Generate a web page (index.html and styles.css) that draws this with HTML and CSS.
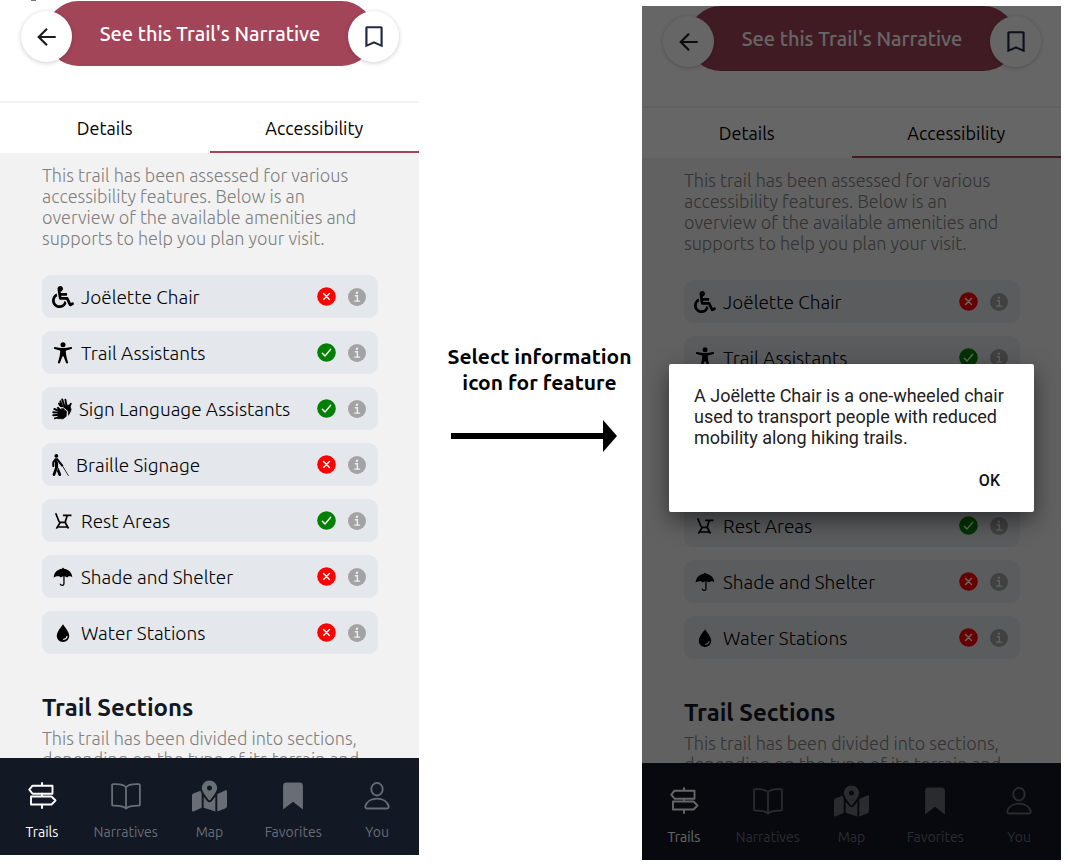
FILE: index.html
```html
<!DOCTYPE html>
<html lang="en">
<head>
<meta charset="utf-8">
<meta name="viewport" content="width=device-width, initial-scale=1">
<title>Trail accessibility</title>
<link rel="stylesheet" href="styles.css">
</head>
<body>
<svg class="sprite" aria-hidden="true">
  <symbol id="i-back" viewBox="0 0 24 24"><path d="M21.5 12H3.5M12 3 3 12l9 9" fill="none" stroke="currentColor" stroke-width="2.4"/></symbol>
  <symbol id="i-save" viewBox="0 0 24 24"><path fill="currentColor" d="M18 18.6 12 16l-6 2.600V4h12M18.500 2h-13C4.700 2 4 2.700 4 3.500V21.500L12 18l8 3.500V3.500C20 2.700 19.300 2 18.500 2Z"/></symbol>
  <symbol id="i-chair" viewBox="0 0 512 512"><path fill="currentColor" d="M496.101 385.669l14.227 28.663c3.929 7.915.697 17.516-7.218 21.445l-65.465 32.886c-16.049 7.967-35.556 1.194-43.189-15.055L331.679 320H192c-15.925 0-29.426-11.710-31.679-27.475C126.433 55.308 128.380 70.044 128 64c0-36.358 30.318-65.635 67.052-63.929 33.271 1.545 60.048 28.905 60.925 62.201.868 32.933-23.152 60.423-54.608 65.039l4.670 32.690H336c8.837 0 16 7.163 16 16v32c0 8.837-7.163 16-16 16H215.182l4.572 32H352a32 32 0 0 1 28.962 18.392L438.477 396.800l36.178-18.349c7.915-3.929 17.517-.697 21.446 7.218zM311.358 352h-24.506c-7.788 54.204-54.528 96-110.852 96-61.757 0-112-50.243-112-112 0-41.505 22.694-77.809 56.324-97.156-3.712-25.965-6.844-47.860-9.488-66.333C45.956 198.464 0 261.963 0 336c0 97.047 78.953 176 176 176 71.870 0 133.806-43.308 161.110-105.192L311.358 352z"/></symbol>
  <symbol id="i-person" viewBox="0 0 22 22"><circle cx="11" cy="2.800" r="2.500" fill="currentColor"/><path fill="currentColor" d="M3.100 5.100c2.600.700 5.200 1 7.900 1s5.300-.3 7.900-1c1.300-.3 1.700 1.500.5 1.900l-5.200 1.400c-.5.200-.5.900-.4 1.600.3 3.500 1 6.600 2.200 9.900.5 1.500-1.400 2.100-2 .8l-2.400-6.200h-1.200L8 20.700c-.6 1.300-2.500.7-2-.8 1.200-3.300 1.900-6.400 2.200-9.900.1-.7.100-1.400-.4-1.600L2.600 7c-1.200-.4-.8-2.200.5-1.900z"/></symbol>
  <symbol id="i-hands" viewBox="0 0 20 22"><g stroke="currentColor" stroke-linecap="round" fill="currentColor"><path d="M10.500 9 8.400 3.300M12.400 8 10.200 1.400M14.500 8 13.400 1.600M16.800 9.500 18.800 5.800M9.600 9.500 7 5.600" stroke-width="1.900" fill="none"/><path d="M9.500 9.800 15 7l2.700.3 1.500 4.200-1.300 3.500-2.400 3.200.2-3.700-3.200-3.500z" stroke-width=".6"/></g><g stroke="#e4e7ec" stroke-width="1" stroke-linecap="round" fill="none"><path d="m6.500 9.300 4.600.4 4.600 3.500-.2 5.400"/></g><g stroke="currentColor" stroke-linecap="round" fill="currentColor"><path d="M8 13.400 2.300 11M8 14.900 1.200 14.200M8 16.800 1.200 17.300M9 18.700 2.800 20.300M9 12.700 5.800 9.800" stroke-width="1.900" fill="none"/><path d="M7.500 12.500 11.200 10.800l3.200 3-.3 4.600-3 2.400-5-.2z" stroke-width=".8"/></g></symbol>
  <symbol id="i-cane" viewBox="0 0 384 512"><path fill="currentColor" d="M380.150 510.837a8 8 0 0 1-10.989-2.687l-125.330-206.427a31.923 31.923 0 0 0 12.958-9.485l126.048 207.608a8 8 0 0 1-2.687 10.991zM142.803 314.338l-32.540 89.485 36.120 88.285c6.693 16.360 25.377 24.192 41.733 17.501 16.357-6.692 24.193-25.376 17.501-41.734l-62.814-153.537zM96 88c24.301 0 44-19.699 44-44S120.301 0 96 0 52 19.699 52 44s19.699 44 44 44zm154.837 169.128l-120-152c-4.733-5.995-11.750-9.108-18.837-9.112V96H80v.026c-7.146.003-14.217 3.161-18.944 9.240L0 183.766v95.694c0 13.455 11.011 24.791 24.464 24.536C37.505 303.748 48 293.100 48 280v-79.766l16-20.571v140.698L9.927 469.055c-6.040 16.609 2.528 34.969 19.138 41.009 16.602 6.039 34.968-2.524 41.009-19.138L136 309.638V202.441l-31.406-39.816a4 4 0 1 1 6.269-4.971l102.300 129.217c9.145 11.584 24.368 11.339 33.708 3.965 10.410-8.216 12.159-23.334 3.966-33.708z"/></symbol>
  <symbol id="i-rest" viewBox="0 0 22 22"><path d="M3.700 3.200 7.200 12M7 12.400h7.300M11 5.300h8.500M15.200 5.800l-2 6.300M8.200 12.500 4.400 18.600M13.200 12.500l3.300 6M6.300 17h9.400" fill="none" stroke="currentColor" stroke-width="1.700"/></symbol>
  <symbol id="i-umbrella" viewBox="0 0 22 22"><path fill="currentColor" d="M11 1.800c.6 0 .9.400.9.900 4.700.4 8.300 4.200 8.400 8.800-.6-.9-1.500-1.300-2.500-1.300-1.200 0-2 .5-2.700 1.300-.7-.8-1.600-1.200-2.500-1.300v7.200c0 1.500-1 2.600-2.500 2.600-1.400 0-2.300-.9-2.400-2.200H9c.1.600.5.900 1.100.9.700 0 1.200-.5 1.200-1.300v-7.200c-1 .1-1.800.5-2.500 1.300-.7-.8-1.500-1.300-2.700-1.300-1.600 0-2.900.4-4.400 1.300.1-4.600 3.700-8.400 8.400-8.800 0-.5.300-.9.900-.9z"/></symbol>
  <symbol id="i-drop" viewBox="0 0 22 22"><path fill="currentColor" d="M11 2.200c1.900 2.900 6.200 7.600 6.200 11.500 0 3.600-2.700 6.200-6.200 6.200s-6.200-2.600-6.200-6.200c0-3.900 4.300-8.600 6.200-11.500z"/><path d="M11.700 17.400c1.700-.1 3.100-1.300 3.300-3.100" fill="none" stroke="#e4e7ec" stroke-width="1.200" stroke-linecap="round"/></symbol>
  <symbol id="i-no" viewBox="0 0 20 20"><circle cx="10" cy="10" r="9.800" fill="red"/><path d="m6.900 6.900 6.200 6.200m0-6.200-6.200 6.200" stroke="#fff" stroke-width="1.500" stroke-linecap="round"/></symbol>
  <symbol id="i-yes" viewBox="0 0 20 20"><circle cx="10" cy="10" r="9.800" fill="green"/><path d="m5.600 10.800 2.800 3 6-7.200" fill="none" stroke="#fff" stroke-width="1.500" stroke-linecap="round" stroke-linejoin="round"/></symbol>
  <symbol id="i-info" viewBox="0 0 18 18"><circle cx="9" cy="9" r="9" fill="#a3a3a3"/><circle cx="8.900" cy="4.700" r="1.200" fill="#eceef1"/><path d="M7.300 7.700h2v5.400M6.600 13.100h5" fill="none" stroke="#eceef1" stroke-width="1.400" stroke-linecap="round"/></symbol>
  <symbol id="i-signs" viewBox="0 0 32 32"><path d="M16 3v2.500M16 13.500v3M16 24.500V28M6.500 5.700h20v8h-20L3.300 9.700zM5 16.500h20.500l4 4-4 4H5z" fill="none" stroke="currentColor" stroke-width="1.900" stroke-linejoin="round" stroke-linecap="round"/></symbol>
  <symbol id="i-book" viewBox="0 0 32 32"><path d="M16 7.200C14 4.700 9.500 3.800 3 4.200c-.6 0-.9.400-.9.900v19.600c0 .6.400.9.900.9 6.500-.2 10.500.5 13 2.900 2.500-2.400 6.500-3.100 13-2.900.5 0 .9-.3.900-.9V5.100c0-.5-.3-.9-.9-.9-6.500-.4-11 .5-13 3zV28" fill="none" stroke="currentColor" stroke-width="1.800" stroke-linejoin="round"/></symbol>
  <symbol id="i-map" viewBox="0 0 576 512"><path fill="currentColor" d="M288 0c-69.590 0-126 56.410-126 126 0 56.260 82.350 158.800 113.900 196.020 6.390 7.540 17.820 7.540 24.200 0C331.650 284.800 414 182.260 414 126 414 56.410 357.590 0 288 0zm0 168c-23.200 0-42-18.800-42-42s18.800-42 42-42 42 18.800 42 42-18.800 42-42 42zM20.120 215.950A32.006 32.006 0 0 0 0 245.660v250.320c0 11.320 11.430 19.060 21.940 14.860L160 448V214.920c-8.840-15.980-16.070-31.540-21.250-46.420L20.120 215.950zM288 359.670c-14.070 0-27.380-6.180-36.510-16.960-19.660-23.200-40.570-49.620-59.490-76.720v182l192 64V266c-18.920 27.090-39.820 53.520-59.490 76.720-9.130 10.770-22.440 16.950-36.510 16.950zm266.060-198.510L416 224v288l139.880-55.950A31.996 31.996 0 0 0 576 426.340V176.020c0-11.320-11.430-19.060-21.940-14.860z"/></symbol>
  <symbol id="i-mark" viewBox="0 0 32 32"><path fill="currentColor" d="M9.500 2.500h13a3.400 3.400 0 0 1 3.400 3.400v23.600L16 21.700 6.100 29.500V5.900a3.400 3.400 0 0 1 3.400-3.400z"/></symbol>
  <symbol id="i-you" viewBox="0 0 32 32"><ellipse cx="16" cy="9.200" rx="5.700" ry="6.300" fill="none" stroke="currentColor" stroke-width="1.800"/><path d="M6 28.500h20c1.300 0 2-1 1.700-2.300-1.300-4.700-6-7.600-11.700-7.600S5.600 21.500 4.300 26.200C4 27.500 4.700 28.500 6 28.500z" fill="none" stroke="currentColor" stroke-width="1.800"/></symbol>
</svg>

<main class="walkthrough">
  <section class="phone" aria-label="Accessibility tab">
    <header class="hero">
      <span class="notch"></span>
      <button class="round" aria-label="Back"><svg class="ico-back"><use href="#i-back"/></svg></button>
      <button class="pill">See this Trail's Narrative</button>
      <button class="round" aria-label="Save trail"><svg class="ico-save"><use href="#i-save"/></svg></button>
    </header>
    <nav class="tabs"><button class="tab">Details</button><button class="tab active">Accessibility</button></nav>
    <div class="content">
      <p class="copy">This trail has been assessed for various<br>accessibility features. Below is an<br>overview of the available amenities and<br>supports to help you plan your visit.</p>
      <ul class="features">
        <li class="feature"><svg class="sym"><use href="#i-chair"/></svg><span class="name">Joëlette Chair</span><svg class="status"><use href="#i-no"/></svg><button class="info" aria-label="About Joëlette Chair"><svg><use href="#i-info"/></svg></button></li>
        <li class="feature"><svg class="sym"><use href="#i-person"/></svg><span class="name">Trail Assistants</span><svg class="status"><use href="#i-yes"/></svg><button class="info" aria-label="About Trail Assistants"><svg><use href="#i-info"/></svg></button></li>
        <li class="feature"><svg class="sym hands"><use href="#i-hands"/></svg><span class="name">Sign Language Assistants</span><svg class="status"><use href="#i-yes"/></svg><button class="info" aria-label="About Sign Language Assistants"><svg><use href="#i-info"/></svg></button></li>
        <li class="feature"><svg class="sym narrow"><use href="#i-cane"/></svg><span class="name">Braille Signage</span><svg class="status"><use href="#i-no"/></svg><button class="info" aria-label="About Braille Signage"><svg><use href="#i-info"/></svg></button></li>
        <li class="feature"><svg class="sym"><use href="#i-rest"/></svg><span class="name">Rest Areas</span><svg class="status"><use href="#i-yes"/></svg><button class="info" aria-label="About Rest Areas"><svg><use href="#i-info"/></svg></button></li>
        <li class="feature"><svg class="sym"><use href="#i-umbrella"/></svg><span class="name">Shade and Shelter</span><svg class="status"><use href="#i-no"/></svg><button class="info" aria-label="About Shade and Shelter"><svg><use href="#i-info"/></svg></button></li>
        <li class="feature"><svg class="sym"><use href="#i-drop"/></svg><span class="name">Water Stations</span><svg class="status"><use href="#i-no"/></svg><button class="info" aria-label="About Water Stations"><svg><use href="#i-info"/></svg></button></li>
      </ul>
      <h2 class="heading">Trail Sections</h2>
      <p class="copy">This trail has been divided into sections,<br>depending on the type of its terrain and</p>
    </div>
    <nav class="bottom">
      <a class="item current" href="#trails"><svg><use href="#i-signs"/></svg>Trails</a>
      <a class="item" href="#narratives"><svg><use href="#i-book"/></svg>Narratives</a>
      <a class="item" href="#map"><svg class="wide"><use href="#i-map"/></svg>Map</a>
      <a class="item" href="#favorites"><svg><use href="#i-mark"/></svg>Favorites</a>
      <a class="item" href="#you"><svg><use href="#i-you"/></svg>You</a>
    </nav>
  </section>

  <section class="step">
    <p class="step-text">Select information<br>icon for feature</p>
    <svg class="arrow" viewBox="0 0 166 32" aria-hidden="true"><path d="M0 13h152V0l14 16-14 16V19H0z"/></svg>
  </section>

  <section class="phone second" aria-label="Feature information">
    <header class="hero">
      <button class="round" aria-label="Back"><svg class="ico-back"><use href="#i-back"/></svg></button>
      <button class="pill">See this Trail's Narrative</button>
      <button class="round" aria-label="Save trail"><svg class="ico-save"><use href="#i-save"/></svg></button>
    </header>
    <nav class="tabs"><button class="tab">Details</button><button class="tab active">Accessibility</button></nav>
    <div class="content">
      <p class="copy">This trail has been assessed for various<br>accessibility features. Below is an<br>overview of the available amenities and<br>supports to help you plan your visit.</p>
      <ul class="features">
        <li class="feature"><svg class="sym"><use href="#i-chair"/></svg><span class="name">Joëlette Chair</span><svg class="status"><use href="#i-no"/></svg><button class="info" aria-label="About Joëlette Chair"><svg><use href="#i-info"/></svg></button></li>
        <li class="feature"><svg class="sym"><use href="#i-person"/></svg><span class="name">Trail Assistants</span><svg class="status"><use href="#i-yes"/></svg><button class="info" aria-label="About Trail Assistants"><svg><use href="#i-info"/></svg></button></li>
        <li class="feature"></li>
        <li class="feature"></li>
        <li class="feature"><svg class="sym"><use href="#i-rest"/></svg><span class="name">Rest Areas</span><svg class="status"><use href="#i-yes"/></svg><button class="info" aria-label="About Rest Areas"><svg><use href="#i-info"/></svg></button></li>
        <li class="feature"><svg class="sym"><use href="#i-umbrella"/></svg><span class="name">Shade and Shelter</span><svg class="status"><use href="#i-no"/></svg><button class="info" aria-label="About Shade and Shelter"><svg><use href="#i-info"/></svg></button></li>
        <li class="feature"><svg class="sym"><use href="#i-drop"/></svg><span class="name">Water Stations</span><svg class="status"><use href="#i-no"/></svg><button class="info" aria-label="About Water Stations"><svg><use href="#i-info"/></svg></button></li>
      </ul>
      <h2 class="heading">Trail Sections</h2>
      <p class="copy">This trail has been divided into sections,<br>depending on the type of its terrain and</p>
    </div>
    <nav class="bottom">
      <a class="item current" href="#trails"><svg><use href="#i-signs"/></svg>Trails</a>
      <a class="item" href="#narratives"><svg><use href="#i-book"/></svg>Narratives</a>
      <a class="item" href="#map"><svg class="wide"><use href="#i-map"/></svg>Map</a>
      <a class="item" href="#favorites"><svg><use href="#i-mark"/></svg>Favorites</a>
      <a class="item" href="#you"><svg><use href="#i-you"/></svg>You</a>
    </nav>
    <div class="scrim">
      <div class="dialog" role="dialog" aria-modal="true" aria-labelledby="dialog-text">
        <p class="dialog-text" id="dialog-text">A Joëlette Chair is a one-wheeled chair<br>used to transport people with reduced<br>mobility along hiking trails.</p>
        <button class="ok">OK</button>
      </div>
    </div>
  </section>
</main>
</body>
</html>
```

FILE: styles.css
```css
* { box-sizing: border-box; }
body {
  margin: 0;
  background: #fff;
  color: #000;
  font-family: Ubuntu, "Noto Sans", sans-serif;
}
button { margin: 0; padding: 0; border: 0; background: none; color: inherit; font: inherit; cursor: pointer; }
p, ul, h2 { margin: 0; padding: 0; }
a { color: inherit; text-decoration: none; }
svg { display: block; flex: none; }
.sprite { position: absolute; width: 0; height: 0; }

.walkthrough {
  display: grid;
  grid-template-columns: 419fr 223fr 419fr;
  align-items: start;
  padding-right: 7px;
}
.phone {
  position: relative;
  display: flex;
  flex-direction: column;
  height: calc(100vh - 13px);
  overflow: hidden;
  white-space: nowrap;
}
.second { margin-top: 5px; }

.hero {
  display: flex;
  justify-content: center;
  padding: 1px 20px 35px 21px;
  border-bottom: 2px solid #f2f2f2;
}
.notch { position: absolute; top: 0; left: 31px; width: 5px; height: 1px; background: #777; }
.pill {
  flex: 1;
  height: 65px;
  margin: 0 -26px;
  border-radius: 33px;
  background: #a34558;
  color: #fff;
  font-size: 20px;
  font-weight: 500;
}
.round {
  position: relative;
  display: grid;
  place-items: center;
  width: 51px;
  height: 51px;
  margin-top: 10px;
  border-radius: 50%;
  background: #fff;
  box-shadow: 0 1px 5px rgba(0, 0, 0, .2);
}
.ico-back { width: 22px; height: 22px; color: #1c1c1e; }
.ico-save { width: 26px; height: 26px; color: #1f2a40; }

.tabs { display: flex; }
.tab { flex: 1; height: 50px; padding-top: 2px; border-bottom: 2px solid transparent; font-size: 18px; line-height: 24px; }
.tab.active { border-color: #a34558; }

.content { flex: 1; min-height: 0; overflow: hidden; padding: 12px 41px 0 42px; background: #f2f2f2; }
.copy { color: #808080; font-size: 18px; font-weight: 300; line-height: 21px; }
.features { display: grid; gap: 13px; margin-top: 26px; list-style: none; }
.feature {
  display: flex;
  align-items: center;
  height: 43px;
  padding: 0 12px 0 10px;
  border-radius: 9px;
  background: #e4e7ec;
  font-size: 19px;
  font-weight: 300;
}
.sym { width: 22px; height: 22px; }
.sym.hands { width: 20px; }
.sym.narrow { width: 17px; }
.name { flex: 1; margin-left: 7px; }
.status { width: 19px; height: 19px; margin-right: 12px; }
.info svg { width: 18px; height: 18px; }
.heading { margin: 39px 0 5px; color: #121824; font-size: 24px; font-weight: 600; line-height: 30px; }

.bottom { display: grid; grid-template-columns: repeat(5, 1fr); height: 97px; padding-top: 22px; background: #121824; }
.item { display: flex; flex-direction: column; align-items: center; gap: 10px; color: #696d76; font-size: 14px; line-height: 20px; }
.item svg { width: 32px; height: 32px; }
.item svg.wide { width: 35px; }
.item.current { color: #fff; }

.step { padding: 343px 8px 0 26px; }
.step-text { font-size: 21px; font-weight: 600; line-height: 26px; text-align: center; white-space: nowrap; }
.arrow { width: 166px; height: 32px; margin: 25px 0 0 6px; }

.scrim {
  position: absolute;
  inset: 1px 0 0;
  display: grid;
  align-items: center;
  padding: 9px 27px 0;
  background: rgba(0, 0, 0, .6);
}
.dialog {
  display: flex;
  flex-direction: column;
  padding: 21px 27px 17px 25px;
  border-radius: 2px;
  background: #fff;
  box-shadow: 0 8px 22px rgba(0, 0, 0, .5);
  color: #212121;
  font-family: Roboto, sans-serif;
}
.dialog-text { font-size: 18px; line-height: 21px; }
.ok { align-self: flex-end; margin-top: 19px; padding: 0 7px; color: #111; font-size: 16px; font-weight: 500; line-height: 28px; }
```
